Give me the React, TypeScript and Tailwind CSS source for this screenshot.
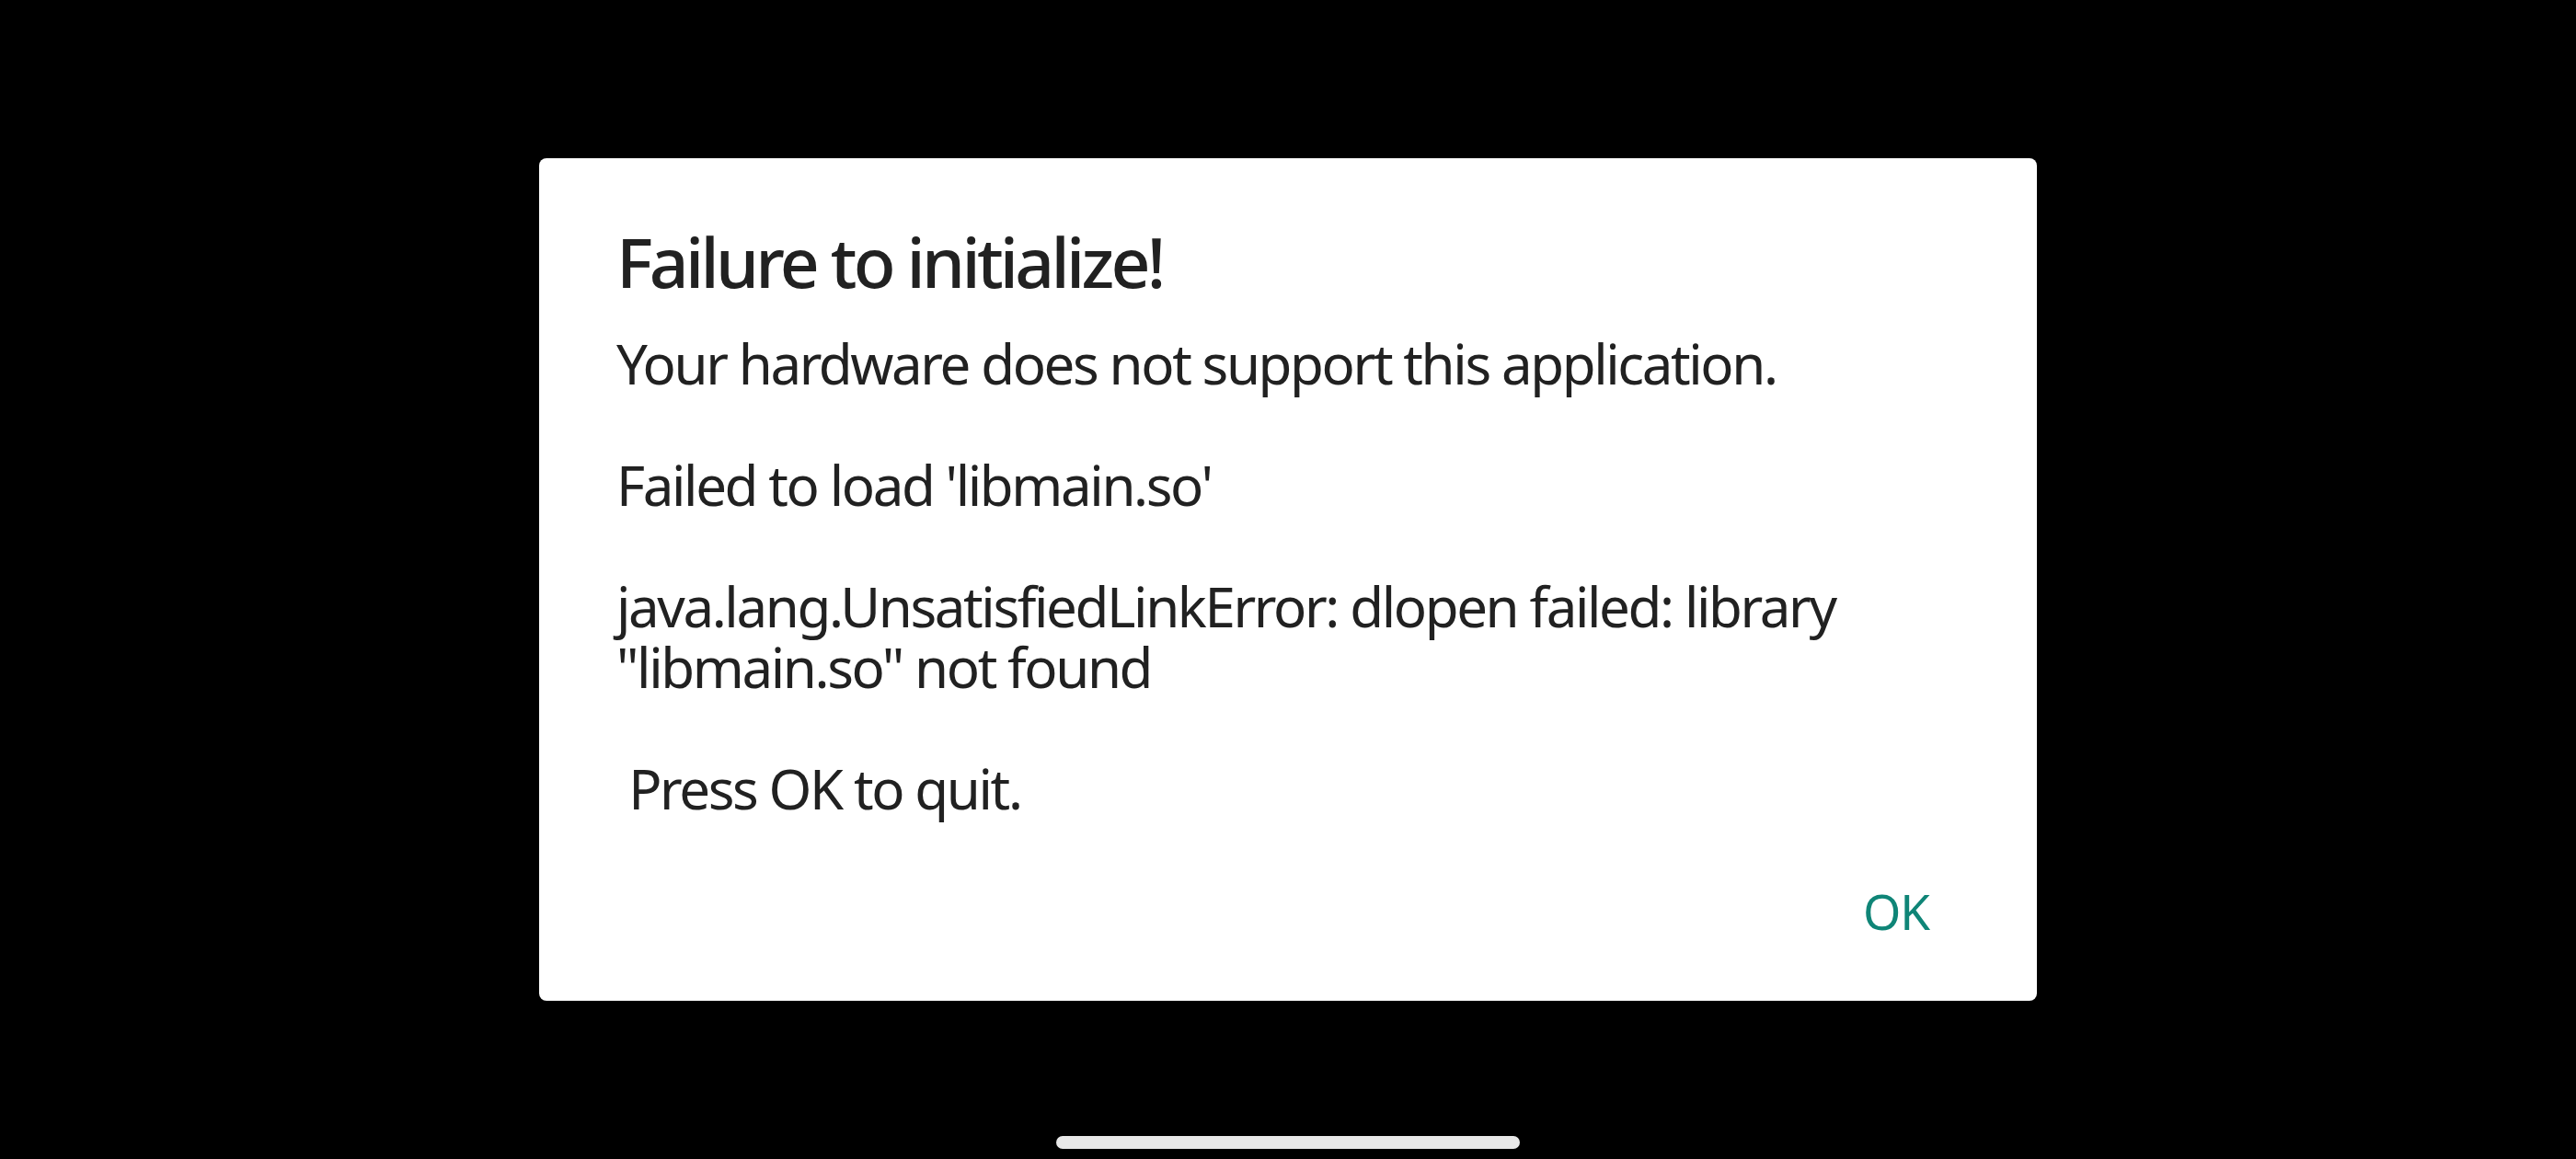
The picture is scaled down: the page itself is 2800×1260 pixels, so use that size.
export default function App() {
  const body =
    "Your hardware does not support this application.\n\n" +
    "Failed to load 'libmain.so'\n\n" +
    "java.lang.UnsatisfiedLinkError: dlopen failed: library\n" +
    "\"libmain.so\" not found\n\n" +
    " Press OK to quit.";

  return (
    <div
      className="relative w-full h-[1260px] bg-black flex items-center justify-center"
      style={{ fontFamily: '"Noto Sans", "Open Sans", sans-serif' }}
    >
      {/* Dialog */}
      <div className="w-[1628px] h-[916px] bg-white rounded-[8px] flex flex-col pt-[62px] pl-[84px] pr-[88px]">
        <h1 className="text-[75px] leading-[100px] font-medium tracking-[-0.05em] text-[#212121]">
          Failure to initialize!
        </h1>
        <p className="mt-[28px] text-[60px] leading-[66px] tracking-[-0.04em] text-[#212121] whitespace-pre">
          {body}
        </p>
        <div className="flex justify-end mt-[69px] mr-[29px]">
          <button className="text-[53px] leading-[64px] tracking-[-0.02em] text-[#0f8577]">OK</button>
        </div>
      </div>

      {/* Gesture bar */}
      <div className="absolute bottom-[11px] left-1/2 -translate-x-1/2 w-[504px] h-[14px] rounded-full bg-[#e8e8e8]" />
    </div>
  );
}
